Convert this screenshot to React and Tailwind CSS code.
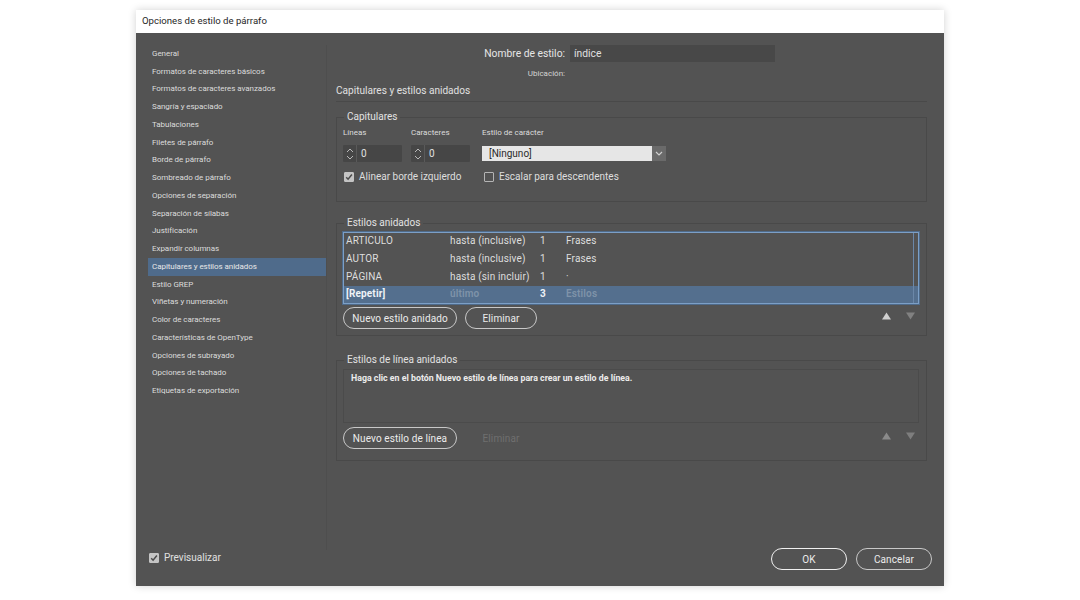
const FONT = "font-['Roboto','Noto_Sans',sans-serif]";

const items = ["General","Formatos de caracteres básicos","Formatos de caracteres avanzados","Sangría y espaciado","Tabulaciones","Filetes de párrafo","Borde de párrafo","Sombreado de párrafo","Opciones de separación","Separación de sílabas","Justificación","Expandir columnas","Capitulares y estilos anidados","Estilo GREP","Viñetas y numeración","Color de caracteres","Características de OpenType","Opciones de subrayado","Opciones de tachado","Etiquetas de exportación"];

const rows = [
  ["ARTICULO","hasta (inclusive)","1","Frases"],
  ["AUTOR","hasta (inclusive)","1","Frases"],
  ["PÁGINA","hasta (sin incluir)","1","·"],
];

function Check({ checked }) {
  return (
    <span className={"flex h-[10px] w-[10px] items-center justify-center rounded-[1px] border " + (checked ? "border-[#c4c4c4] bg-[#c4c4c4]" : "border-[#b4b4b4] bg-transparent")}>
      {checked && (
        <svg width="8" height="8" viewBox="0 0 8 8" fill="none">
          <path d="M1.2 4.2 3.1 6.2 6.9 1.6" stroke="#4a4a4a" strokeWidth="1.5" />
        </svg>
      )}
    </span>
  );
}

function Stepper({ width }) {
  return (
    <div className={"flex h-[17px] items-center rounded-[1px] bg-[#464646] " + width}>
      <div className="flex h-full w-[14px] flex-col items-center justify-center gap-[2px] border-r border-[#5a5a5a]">
        <svg width="8" height="5" viewBox="0 0 8 5" fill="none"><path d="M1 4 4 1l3 3" stroke="#b8b8b8" strokeWidth="1" /></svg>
        <svg width="8" height="5" viewBox="0 0 8 5" fill="none"><path d="M1 1l3 3 3-3" stroke="#b8b8b8" strokeWidth="1" /></svg>
      </div>
      <span className="pl-[4px] text-[10px] text-[#e0e0e0]">0</span>
    </div>
  );
}

function Section({ title, className, children }) {
  return (
    <section className={"relative w-[591px] border border-[#494949] " + className}>
      <span className="absolute left-[7px] top-[-8px] bg-[#535353] px-[3px] text-[10px] leading-[14px] text-[#e2e2e2]">{title}</span>
      {children}
    </section>
  );
}

function Btn({ children, width, strong, disabled }) {
  if (disabled) {
    return <div className={"flex h-[22px] items-center justify-center text-[10px] tracking-[0.1px] text-[#6f6f6f] " + width}>{children}</div>;
  }
  return (
    <button className={"flex h-[22px] items-center justify-center rounded-full border bg-[#535353] text-[10px] tracking-[0.1px] text-[#ececec] " + (strong ? "border-[#f0f0f0] border-[1.5px] " : "border-[#c8c8c8] ") + width}>
      {children}
    </button>
  );
}

function Arrows({ dim }) {
  return (
    <div className="mb-[5px] ml-auto mr-[4px] flex gap-[15px]">
      <svg width="9" height="8" viewBox="0 0 9 8"><path d="M4.5 0.5 9 7.5H0z" fill={dim ? "#8a8a8a" : "#d0d0d0"} /></svg>
      <svg width="9" height="8" viewBox="0 0 9 8"><path d="M0 0.5h9L4.5 7.5z" fill={dim ? "#7e7e7e" : "#818181"} /></svg>
    </div>
  );
}

export default function App() {
  return (
    <div className={"h-[600px] w-[1080px] overflow-hidden bg-white pl-[136px] pt-[10px] " + FONT}>
      <div className="flex h-[576px] w-[808px] flex-col shadow-[0_0_8px_rgba(0,0,0,0.18)]">
        <header className="flex h-[23px] items-center bg-white pl-[6px] text-[9.6px] text-[#262626]">Opciones de estilo de párrafo</header>
        <div className="flex min-h-0 flex-1 bg-[#535353]">
          <aside className="flex w-[200px] flex-col pb-[21px] pl-[12px] pt-[12px]">
            <nav className="flex w-[179px] flex-1 flex-col border-r border-[#4e4e4e]">
              {items.map((t) => (
                <div key={t} className={"flex h-[17.75px] shrink-0 items-center pl-[4px] text-[8px] tracking-[-0.05px] " + (t === "Capitulares y estilos anidados" ? "bg-[#4f6b8b] text-[#e8e8e8]" : "text-[#dcdcdc]")}>{t}</div>
              ))}
            </nav>
            <div className="flex items-center gap-[5px] pl-[1px]">
              <Check checked />
              <span className="text-[10px] text-[#e0e0e0]">Previsualizar</span>
            </div>
          </aside>

          <main className="flex flex-1 flex-col pt-[12px] text-[#e0e0e0]">
            <div className="flex h-[17px] items-center">
              <label className="w-[229px] text-right text-[10.3px] text-[#e6e6e6]">Nombre de estilo:</label>
              <div className="ml-[5px] flex h-[17px] w-[205px] items-center bg-[#484848] pl-[4px] text-[10.3px] text-[#e0e0e0]">índice</div>
            </div>
            <div className="mt-[6px] h-[12px] w-[229px] text-right text-[8px] leading-[12px] text-[#d4d4d4]">Ubicación:</div>
            <h2 className="mt-[4px] h-[18px] w-[591px] border-b border-[#494949] text-[10.1px] font-normal leading-[14px] text-[#e0e0e0]">Capitulares y estilos anidados</h2>

            <Section title="Capitulares" className="mt-[15px] h-[85px] pl-[6px] pt-[9px]">
              <div className="flex text-[8px] leading-[12px] text-[#dcdcdc]">
                <span className="w-[68px]">Líneas</span>
                <span className="w-[71px]">Caracteres</span>
                <span>Estilo de carácter</span>
              </div>
              <div className="mt-[6px] flex items-center">
                <div className="w-[68px]"><Stepper width="w-[59px]" /></div>
                <div className="w-[71px]"><Stepper width="w-[59px]" /></div>
                <div className="flex h-[15px] w-[170px] items-center bg-[#e6e6e6] pl-[7px] text-[10px] text-[#2a2a2a]">[Ninguno]</div>
                <div className="flex h-[15px] w-[14px] items-center justify-center bg-[#6a6a6a]">
                  <svg width="8" height="5" viewBox="0 0 8 5" fill="none"><path d="M1 1l3 3 3-3" stroke="#d0d0d0" strokeWidth="1.2" /></svg>
                </div>
              </div>
              <div className="mt-[7px] flex items-center text-[10px] text-[#dedede]">
                <div className="flex w-[139px] items-center gap-[5px] pl-[1px]"><Check checked /><span>Alinear borde izquierdo</span></div>
                <div className="ml-[2px] flex items-center gap-[5px]"><Check /><span>Escalar para descendentes</span></div>
              </div>
            </Section>

            <Section title="Estilos anidados" className="mt-[21px] h-[113px] pl-[6px] pr-[7px] pt-[8px]">
              <div className="relative h-[72px] border border-[#7c9fc6] text-[10px] tracking-[0.15px] shadow-[0_0_0_1px_#4f6b8b]">
                {rows.map((r) => (
                  <div key={r[0]} className="flex h-[17.75px] items-center pb-[2px] pl-[2px] text-[#dedede]">
                    <span className="w-[104px]">{r[0]}</span>
                    <span className="w-[90px]">{r[1]}</span>
                    <span className="w-[26px]">{r[2]}</span>
                    <span>{r[3]}</span>
                  </div>
                ))}
                <div className="flex h-[17px] items-center bg-[#546f8e] pb-[2px] pl-[2px]">
                  <span className="w-[104px] font-bold text-[#eef2f6]">[Repetir]</span>
                  <span className="w-[90px] font-semibold text-[#7f93a9]">último</span>
                  <span className="w-[26px] font-bold text-[#eef2f6]">3</span>
                  <span className="font-semibold text-[#7f93a9]">Estilos</span>
                </div>
                <div className="absolute inset-y-0 right-0 w-[5px] border-l border-[#6b87a8]" />
              </div>
              <div className="mt-[3px] flex items-center gap-[8px]">
                <Btn width="w-[114px]">Nuevo estilo anidado</Btn>
                <Btn width="w-[72px]">Eliminar</Btn>
                <Arrows />
              </div>
            </Section>

            <Section title="Estilos de línea anidados" className="mt-[24px] h-[101px] pl-[6px] pr-[7px] pt-[8px]">
              <div className="h-[54px] border border-[#4b4b4b] pl-[7px] pt-[2px] text-[8.8px] font-bold leading-[13px] text-[#ececec]">
                Haga clic en el botón Nuevo estilo de línea para crear un estilo de línea.
              </div>
              <div className="mt-[4px] flex items-center gap-[8px]">
                <Btn width="w-[114px]">Nuevo estilo de línea</Btn>
                <Btn width="w-[72px]" disabled>Eliminar</Btn>
                <Arrows dim />
              </div>
            </Section>

            <div className="mb-[16px] mt-auto flex justify-end gap-[9px] pr-[12px]">
              <Btn width="w-[76px]" strong>OK</Btn>
              <Btn width="w-[76px]">Cancelar</Btn>
            </div>
          </main>
        </div>
      </div>
    </div>
  );
}
